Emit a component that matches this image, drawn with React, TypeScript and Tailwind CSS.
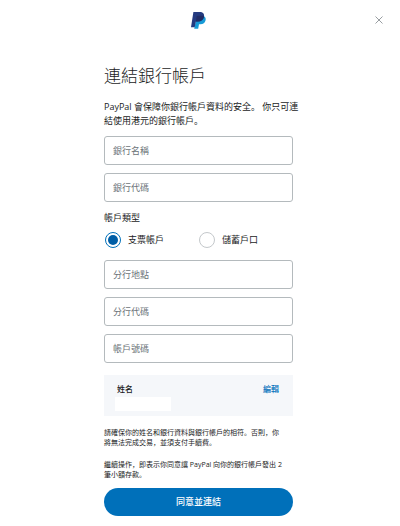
import React, { useState } from "react";

function PayPalLogo() {
  return (
    <svg viewBox="0 0 15 17" className="h-[17px] w-[15px]" role="img" aria-label="PayPal">
      <path
        d="M6 4h6.600c1.800 1 2.400 2.500 2 4.300-.6 2.800-2.400 4-5.200 4H8l-.8 4.500H3.200z"
        fill="#179bd7"
      />
      <path
        d="M2.400 0h6.200c3.400 0 5 1.700 4.400 4.700-.6 3.100-2.800 4.700-6.100 4.700H4.900L3.700 15.300H0z"
        fill="#253b80"
      />
      <path
        d="M5.700 4.400c.1-.4.4-.6.8-.6h4.400c.8 0 1.500.1 2.100.3v.6c-.6 3.100-2.800 4.700-6.100 4.700H4.900z"
        fill="#222d65"
      />
    </svg>
  );
}

function Field({ label }: { label: string }) {
  return (
    <input
      type="text"
      aria-label={label}
      placeholder={label}
      className="block h-[29px] w-full rounded-[3px] border border-[#b4babd] bg-white px-2 text-[9px] text-[#1a1c1d] outline-none placeholder:text-[#6c7378] placeholder:opacity-100 focus:border-[#0070ba]"
    />
  );
}

type RadioProps = { label: string; checked: boolean; onSelect: () => void };

function Radio({ label, checked, onSelect }: RadioProps) {
  return (
    <label className="flex cursor-pointer items-center gap-[7px]">
      <input
        type="radio"
        name="accountType"
        checked={checked}
        onChange={onSelect}
        className="size-4 appearance-none rounded-full border border-[#c4c8cb] bg-white checked:border-[#0070ba] checked:bg-[#005ea6] checked:bg-clip-content checked:p-[2px]"
      />
      {label}
    </label>
  );
}

export default function App() {
  const [type, setType] = useState("checking");

  return (
    <div className="bg-white pr-[3px] font-['Open_Sans','Noto_Sans_CJK_SC',sans-serif] text-[#1a1c1d]">
      <header className="grid h-10 grid-cols-3 items-center px-[10px]">
        <span />
        <span className="justify-self-center">
          <PayPalLogo />
        </span>
        <button type="button" aria-label="關閉" className="justify-self-end p-1 text-[#6c7378]">
          <svg viewBox="0 0 8 8" className="size-2" fill="none" stroke="currentColor" strokeWidth="0.7">
            <path d="M.5.5l7 7M7.500.5l-7 7" />
          </svg>
        </button>
      </header>

      <main className="mx-auto max-w-[189px] pb-2 text-[9px]">
        <h1 className="pt-6 text-[17px] leading-6 font-light">連結銀行帳戶</h1>
        <p className="mt-3 leading-[14px] whitespace-nowrap">
          PayPal 會保障你銀行帳戶資料的安全。 你只可連
          <br />
          結使用港元的銀行帳戶。
        </p>

        <form onSubmit={(e) => e.preventDefault()}>
          <div className="mt-2 flex flex-col gap-2">
            <Field label="銀行名稱" />
            <Field label="銀行代碼" />
          </div>

          <fieldset className="mt-2">
            <legend className="leading-4">帳戶類型</legend>
            <div className="mt-[6px] grid grid-cols-2 pl-[1px]">
              <Radio label="支票帳戶" checked={type === "checking"} onSelect={() => setType("checking")} />
              <Radio label="儲蓄戶口" checked={type === "savings"} onSelect={() => setType("savings")} />
            </div>
          </fieldset>

          <div className="mt-3 flex flex-col gap-2">
            <Field label="分行地點" />
            <Field label="分行代碼" />
            <Field label="帳戶號碼" />
          </div>

          <section className="mt-3 bg-[#f5f7fa] pt-2 pr-[14px] pb-[5px] pl-[11px] text-[8px] leading-3">
            <div className="flex items-center justify-between pl-[2px] font-medium">
              <span>姓名</span>
              <a href="#edit" className="text-[#0070ba]">
                編輯
              </a>
            </div>
            <div className="mt-[2px] h-[14px] w-14 bg-white" />
          </section>

          <div className="mt-3 flex flex-col gap-3 text-[7px] leading-[10px] whitespace-nowrap">
            <p>
              請確保你的姓名和銀行資料與銀行帳戶的相符。否則，你
              <br />
              將無法完成交易，並須支付手續費。
            </p>
            <p>
              繼續操作，即表示你同意讓 PayPal 向你的銀行帳戶發出 2
              <br />
              筆小額存款。
            </p>
          </div>

          <button
            type="submit"
            className="mt-2 block h-7 w-full rounded-full bg-[#0070ba] text-[9px] font-medium text-white"
          >
            同意並連結
          </button>
        </form>
      </main>
    </div>
  );
}
